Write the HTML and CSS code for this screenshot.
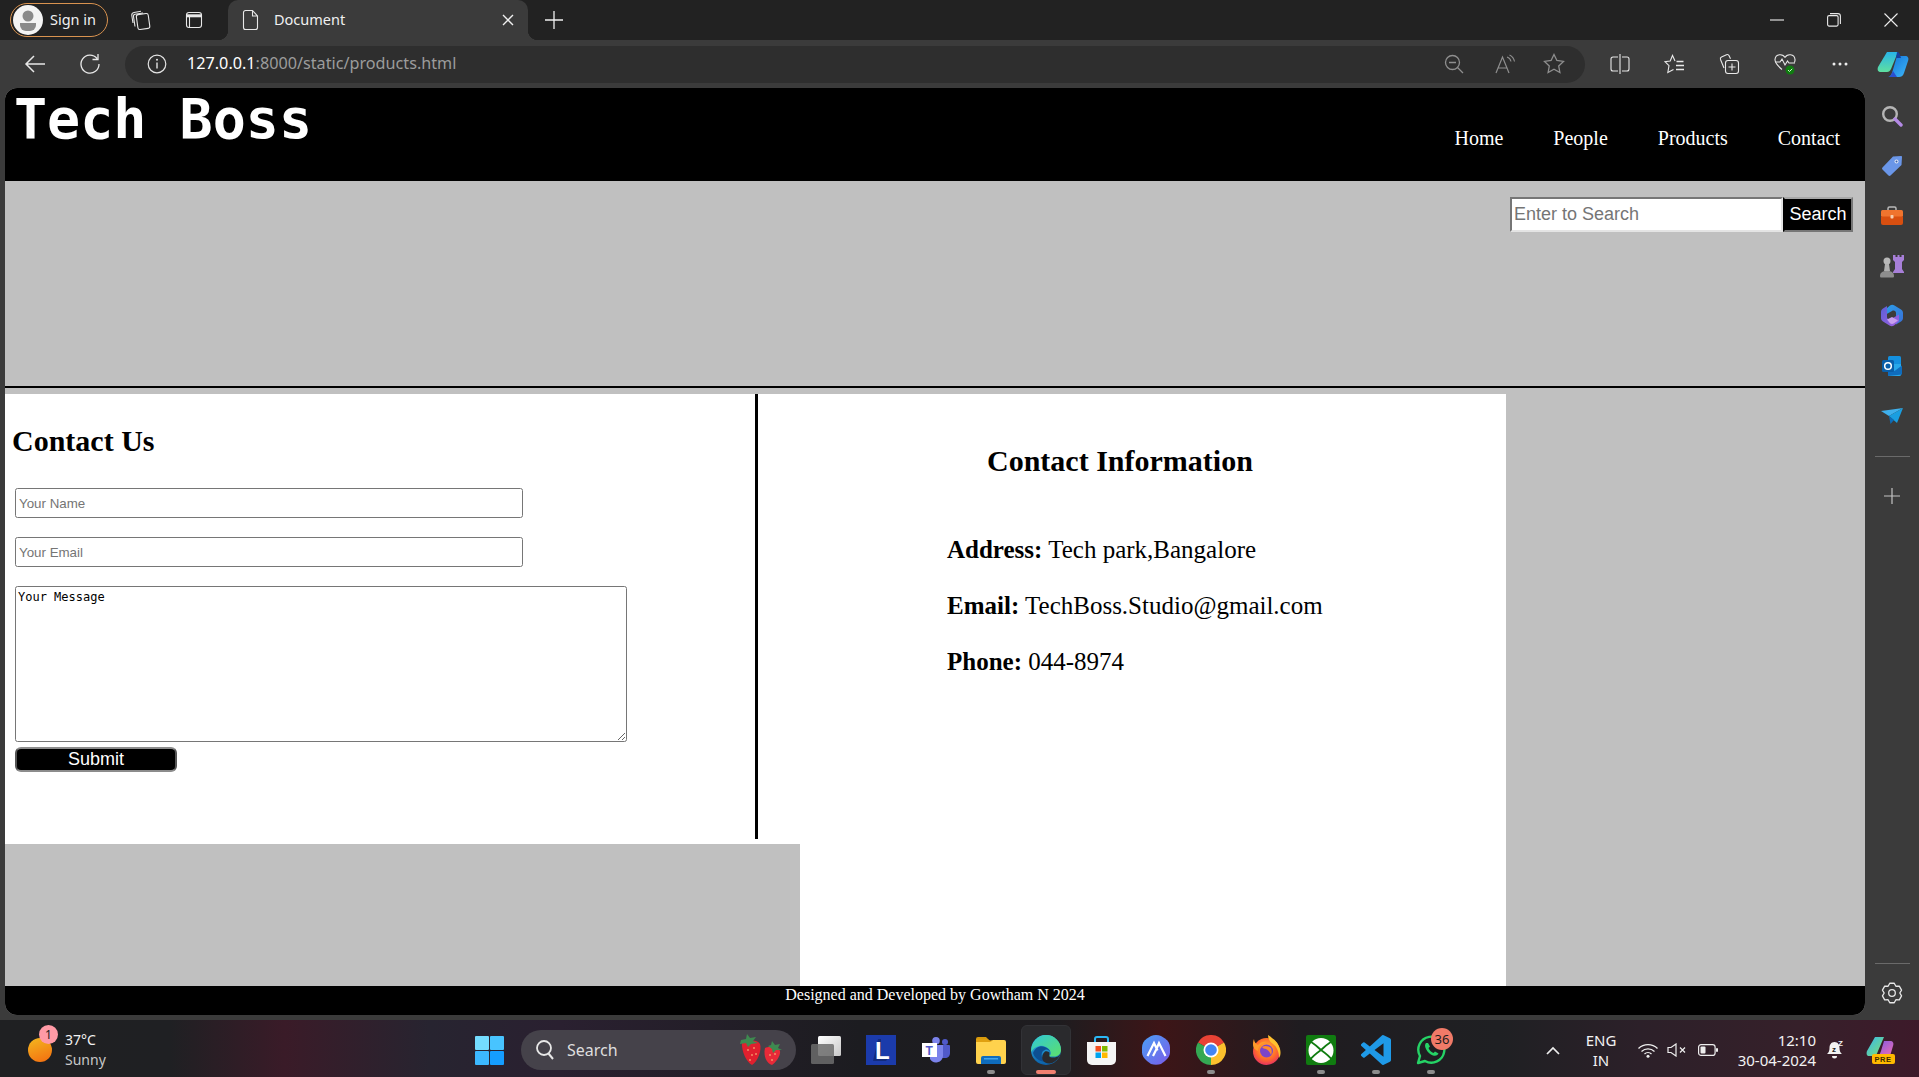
FILE: index.html
```html
<!DOCTYPE html>
<html lang="en">
<head>
<meta charset="utf-8">
<title>Document</title>
<link rel="stylesheet" href="styles.css">
</head>
<body>
<div class="screen">

  <div class="titlebar">
    <div class="signin">
      <svg class="avatar" width="30" height="30" viewBox="0 0 30 30"><circle cx="15" cy="15" r="15" fill="#f4f4f4"/><circle cx="15" cy="11" r="5.5" fill="#8a8a8a"/><path d="M7 18h16v2a6 6 0 0 1-6 6h-4a6 6 0 0 1-6-6z" fill="#8a8a8a"/></svg>
      <span class="nudge">Sign in</span>
    </div>
    <div class="tslot first"><svg width="22" height="22" viewBox="0 0 22 22" class="ln"><rect x="7" y="5" width="12" height="15" rx="2" transform="rotate(-8 13 12)"/><path d="M5 17.500 3.500 7.500c-.2-1 .4-2 1.500-2.200l8-1.300M3 14 1.800 6.500C1.600 5 2.500 3.800 4 3.500l7-1.200"/></svg></div>
    <div class="tslot second"><svg width="20" height="20" viewBox="0 0 20 20" class="ln"><rect x="2.500" y="2.500" width="15" height="15" rx="2.500"/><path d="M2.500 5.800h15" stroke-width="3"/><path d="M5.500 6v11"/></svg></div>
    <div class="tab">
      <svg width="18" height="22" viewBox="0 0 18 22" class="ln"><path d="M3.500 1.500h7l5 5.500v11.500a2 2 0 0 1-2 2h-10a2 2 0 0 1-2-2v-15a2 2 0 0 1 2-2zM10.500 1.500V7h5"/></svg>
      <span class="tab-title nudge">Document</span>
      <svg class="tab-close" width="12" height="12" viewBox="0 0 12 12"><path d="M1 1l10 10M11 1 1 11" stroke="#f0f0f0" stroke-width="1.400"/></svg>
    </div>
    <div class="tslot second"><svg width="18" height="18" viewBox="0 0 18 18"><path d="M9 0v18M0 9h18" stroke="#f0f0f0" stroke-width="1.300"/></svg></div>
    <div class="winctl">
      <div class="wslot"><svg width="14" height="14" viewBox="0 0 14 14"><path d="M0 7h14" stroke="#eee" stroke-width="1.100"/></svg></div>
      <div class="wslot"><svg width="14" height="14" viewBox="0 0 14 14" class="ln"><rect x=".6" y="2.600" width="10.500" height="10.500" rx="1.500"/><path d="M3 .6h8a2.500 2.500 0 0 1 2.400 2.400v8"/></svg></div>
      <div class="wslot"><svg width="14" height="14" viewBox="0 0 14 14"><path d="M.5.5l13 13M13.500.5l-13 13" stroke="#eee" stroke-width="1.100"/></svg></div>
    </div>
  </div>

  <div class="toolbar">
    <div class="bslot back"><svg width="22" height="20" viewBox="0 0 22 20"><path d="M21 10H2M10 2l-8 8 8 8" fill="none" stroke="#e8e8e8" stroke-width="1.500"/></svg></div>
    <div class="bslot reload"><svg width="22" height="22" viewBox="0 0 22 22" class="ln"><path d="M18 5.500A9 9 0 1 0 20 11M19 1v5.500h-5.500" stroke-width="1.300"/></svg></div>
    <div class="addr">
      <svg class="info" width="20" height="20" viewBox="0 0 20 20"><circle cx="10" cy="10" r="8.800" fill="none" stroke="#e4e4e4" stroke-width="1.200"/><path d="M10 8.500v6" stroke="#e4e4e4" stroke-width="1.400"/><circle cx="10" cy="5.800" r="1" fill="#e4e4e4"/></svg>
      <div class="url"><span class="host">127.0.0.1</span>:8000/static/products.html</div>
      <div class="addr-icons">
        <div class="aslot"><svg width="20" height="20" viewBox="0 0 20 20"><circle cx="8.500" cy="8.500" r="7" fill="none" stroke="#8f8f8f" stroke-width="1.300"/><path d="M5 8.500h7M13.500 13.500 19 19" stroke="#8f8f8f" stroke-width="1.300"/></svg></div>
        <div class="aslot read"><svg width="22" height="20" viewBox="0 0 22 20"><path d="M1 19 7.500 3 14 19M3.300 14h8.400" fill="none" stroke="#8f8f8f" stroke-width="1.200"/><path d="M12 3a6 6 0 0 1 4 4.500M14.500 1a9 9 0 0 1 5 6.500" fill="none" stroke="#8f8f8f" stroke-width="1.100"/></svg></div>
        <div class="aslot"><svg width="22" height="22" viewBox="0 0 22 22"><path d="M11 1.500l2.900 6 6.600.9-4.800 4.600 1.200 6.500-5.900-3.200-5.900 3.200 1.200-6.500L1.500 8.400l6.600-.9z" fill="none" stroke="#8f8f8f" stroke-width="1.300"/></svg></div>
      </div>
    </div>
    <div class="bslot splitfirst"><svg width="20" height="20" viewBox="0 0 20 20" class="ln"><path d="M8 3H3a2 2 0 0 0-2 2v10a2 2 0 0 0 2 2h5M12 3h5a2 2 0 0 1 2 2v10a2 2 0 0 1-2 2h-5M10 0v20"/></svg></div>
    <div class="bslot"><svg width="21" height="20" viewBox="0 0 21 20" class="ln"><path d="M11 7 8.500 1.500 6.200 7 1 7.600l4 4-1.200 6.900 5.700-3"/><path d="M12.500 7.500h7M12 11.500h8M12 15.500h8" stroke-width="1.300"/></svg></div>
    <div class="bslot"><svg width="21" height="22" viewBox="0 0 21 22" class="ln"><path d="M5 15 1.500 6.500a2 2 0 0 1 1-2.500l5-2.300a2 2 0 0 1 2.600 1l1.400 3"/><rect x="6.500" y="7.500" width="13" height="13" rx="2.500"/><path d="M13 10.500v7M9.500 14h7"/></svg></div>
    <div class="bslot"><svg width="22" height="24" viewBox="0 0 22 24" class="ln"><path d="M11 5.500C9 1.500 1.500 1.500 1 7.500c-.2 3 3 6.500 7 10M11 5.500c2-4 9.500-4 10 2 .1 1-.1 2-.6 3"/><path d="M1 10h5l2-3 3 6 2.500-4 1.500 2h6"/><circle cx="16" cy="18" r="4.500" fill="#107c10" stroke="none"/><path d="M14 18l1.500 1.500 2.700-2.700" stroke="#d4f0d4" stroke-width="1"/></svg></div>
    <div class="bslot"><svg width="16" height="4" viewBox="0 0 16 4"><circle cx="2" cy="2" r="1.500" fill="#eee"/><circle cx="8" cy="2" r="1.500" fill="#eee"/><circle cx="14" cy="2" r="1.500" fill="#eee"/></svg></div>
    <div class="bslot last"><svg width="32" height="28" viewBox="0 0 32 28"><defs><linearGradient id="cp1" x1="0" y1="0" x2="0" y2="1"><stop offset="0" stop-color="#28b4e8"/><stop offset="1" stop-color="#5fe0a0"/></linearGradient><linearGradient id="cp2" x1="0" y1="0" x2="1" y2="1"><stop offset="0" stop-color="#0f6fd8"/><stop offset="1" stop-color="#3fb8f8"/></linearGradient></defs><path d="M10 2h11l-7 17c-1 2-2 3-4 3H4c-3 0-4-2-3-5z" fill="url(#cp1)"/><path d="M20 6h8c3 0 4 2 3 5l-4 12c-1 3-3 4-5 4H11c2 0 3-2 4-4z" fill="url(#cp2)"/><path d="M20 2c2 0 3 2 3 3l1 3h-5z" fill="#163f9e"/><path d="M11 27c2 0 3-2 4-4l1-2 4 6z" fill="#2a4fd0"/></svg></div>
  </div>

  <div class="mainrow">
    <div class="page">
      <header class="site-head">
        <h1 class="brand">Tech Boss</h1>
        <nav class="site-nav"><a>Home</a><a>People</a><a>Products</a><a>Contact</a></nav>
      </header>
      <div class="hero">
        <form class="searchform"><input class="searchbox" placeholder="Enter to Search"><button class="searchbtn" type="button">Search</button></form>
      </div>
      <div class="rule"></div>
      <div class="contact">
        <div class="contact-left">
          <div class="form-panel">
            <form class="form-col">
              <h2 class="form-title">Contact Us</h2>
              <input class="field" placeholder="Your Name">
              <input class="field" placeholder="Your Email">
              <textarea class="msg">Your Message</textarea>
              <button class="submit" type="button">Submit</button>
            </form>
            <div class="divider"></div>
          </div>
        </div>
        <div class="contact-right">
          <h2 class="info-title">Contact Information</h2>
          <p class="info-row"><b>Address:</b> Tech park,Bangalore</p>
          <p class="info-row"><b>Email:</b> TechBoss.Studio@gmail.com</p>
          <p class="info-row"><b>Phone:</b> 044-8974</p>
        </div>
      </div>
      <footer class="site-foot">Designed and Developed by Gowtham N 2024</footer>
    </div>

    <aside class="sidebar">
      <div class="sslot"><svg width="22" height="22" viewBox="0 0 22 22"><circle cx="9" cy="9" r="6.800" fill="none" stroke="#b5b5b5" stroke-width="2.400"/><path d="M14 14l6 6" stroke="#b48ae6" stroke-width="3.400" stroke-linecap="round"/></svg></div>
      <div class="sslot"><svg width="22" height="22" viewBox="0 0 22 22"><path d="M12 1.500 20 1c.6 0 1 .4 1 1l-.5 8L9.500 20.500c-.6.600-1.500.6-2 0L1.500 14.500c-.6-.6-.6-1.500 0-2z" fill="#6a96e8"/><circle cx="15.500" cy="6.500" r="2" fill="#dfe8f8"/><circle cx="15.500" cy="6.500" r="1" fill="#3a5fa8"/></svg></div>
      <div class="sslot"><svg width="22" height="20" viewBox="0 0 22 20"><path d="M7 5V2.500C7 1.700 7.700 1 8.500 1h5c.8 0 1.500.7 1.500 1.500V5" fill="none" stroke="#b9b9b9" stroke-width="1.500"/><rect y="4" width="22" height="7" rx="1.500" fill="#f0742e"/><path d="M0 10.500h22V17a2 2 0 0 1-2 2H2a2 2 0 0 1-2-2z" fill="#d84f10"/><rect x="9.500" y="9" width="3" height="3.500" rx=".8" fill="#f7d0b0"/></svg></div>
      <div class="sslot"><svg width="24" height="24" viewBox="0 0 24 24"><path d="M13 1h2.500v2h2V1h2v2h2V1H24v5l-2 2v7l2 3v1H13v-1l2-3V8l-2-2z" fill="#a77fd8"/><circle cx="7" cy="7" r="3.500" fill="#b8b8b8"/><path d="M5 10h4l1 7H4z" fill="#b0b0b0"/><path d="M0 22c0-3 2-5 7-5s7 2 7 5c0 1-.5 1.500-1.500 1.500h-11C.5 23.500 0 23 0 22z" fill="#8d8d8d"/></svg></div>
      <div class="sslot"><svg width="22" height="24" viewBox="0 0 22 24"><defs><linearGradient id="m1" x1="0" y1="0" x2="1" y2="1"><stop offset="0" stop-color="#5b5fd6"/><stop offset="1" stop-color="#a060e0"/></linearGradient><linearGradient id="m2" x1="0" y1="0" x2="1" y2="1"><stop offset="0" stop-color="#2a9fe8"/><stop offset="1" stop-color="#3a6fd8"/></linearGradient></defs><path d="M9 1.500c1.500-1 3-1 4.500 0L20 5.500c1.300.8 2 2 2 3.500v5c0 1.500-.7 2.700-2 3.500L15 20.500V9c0-2-2-3-4-2L4 11V7c0-1 .5-1.900 1.500-2.500z" fill="url(#m2)"/><path d="M0 8c0-1.500.7-2.700 2-3.500L6 2v11c0 2 2 3 4 2l8-4.500V16c0 1-.5 1.900-1.500 2.500L13 21.500c-1.500 1-3 1-4.500 0L2 17.500C.7 16.700 0 15.500 0 14z" fill="url(#m1)"/><path d="M6 15.500 11 13l6 3.500-4 2.800a4 4 0 0 1-4 0z" fill="#c8a0f0"/></svg></div>
      <div class="sslot"><svg width="20" height="20" viewBox="0 0 20 20"><rect x="6" y="0" width="13" height="18" rx="1.500" fill="#1490df"/><path d="M6 8l13 0v10.500a1.500 1.500 0 0 1-1.500 1.500H7.500A1.500 1.500 0 0 1 6 18.500z" fill="#28a8ea"/><path d="M6 11l6.500 4L20 9.500v9L6 20z" fill="#0f6cbd"/><rect x="0" y="4" width="12" height="12" rx="1.500" fill="#0a5ea8"/><circle cx="6" cy="10" r="3.300" fill="none" stroke="#fff" stroke-width="1.500"/></svg></div>
      <div class="sslot"><svg width="22" height="16" viewBox="0 0 22 16"><path d="M0 3 22 0 8 8z" fill="#3fb0ec"/><path d="M22 0 16 15 8 8z" fill="#1a9ee0"/><path d="M8 8l1.500 8 3.500-4z" fill="#0c6cb8"/></svg></div>
      <div class="side-sep"></div>
      <div class="sslot plus"><svg width="16" height="16" viewBox="0 0 16 16"><path d="M8 0v16M0 8h16" stroke="#c4c4c4" stroke-width="1.200"/></svg></div>
      <div class="side-sep bottom"></div>
      <div class="sslot gear"><svg width="22" height="22" viewBox="0 0 22 22" class="ln gear-ico"><path d="M8.750 1.260h4.500L14.900 4.250l3.410-.07 2.250 3.900L18.800 11l1.760 2.920-2.250 3.900-3.410-.07-1.650 2.990h-4.500L7.100 17.750l-3.410.07-2.250-3.900L3.200 11 1.440 8.080l2.250-3.900 3.410.07z"/><circle cx="11" cy="11" r="3.300"/></svg></div>
    </aside>
  </div>

  <div class="taskbar">
    <div class="widgets">
      <div class="sun"><span class="sun-badge">1</span></div>
      <div class="weather"><span>37°C</span><span class="dim">Sunny</span></div>
    </div>
    <svg class="start" width="29" height="29" viewBox="0 0 29 29"><rect width="14" height="14" rx="1" fill="#74dcff"/><rect x="15" width="14" height="14" rx="1" fill="#48c4ff"/><rect y="15" width="14" height="14" rx="1" fill="#3cb8ff"/><rect x="15" y="15" width="14" height="14" rx="1" fill="#159dff"/></svg>
    <div class="tsearch">
      <svg width="20" height="22" viewBox="0 0 20 22"><circle cx="9" cy="9" r="7" fill="none" stroke="#e8e8e8" stroke-width="1.800"/><path d="M13.500 14.500 18 20" stroke="#e8e8e8" stroke-width="2"/></svg>
      <span class="tsearch-text">Search</span>
      <svg class="berries" width="44" height="32" viewBox="0 0 44 32"><path d="M3 8c3-2 15-3 18 2 2 6-2 17-8 21-5-2-11-14-10-23z" fill="#e0202e"/><path d="M26 14c4-2 13-1 15 3 1 5-5 12-8 14-5-1-9-9-7-17z" fill="#e82a38"/><path d="M2 6 7 5l1-5 3 4 6-1-3 4 5 2-7 1-3 3-2-4-6 1z" fill="#3e8a50"/><path d="M29 12l3-1 1-4 3 4 5-1-2 4 4 2-6 0-3 3-1-4z" fill="#3e8a50"/><g fill="#ffd88a"><circle cx="9" cy="16" r=".8"/><circle cx="15" cy="14" r=".8"/><circle cx="13" cy="21" r=".8"/><circle cx="17" cy="20" r=".8"/><circle cx="11" cy="26" r=".8"/><circle cx="31" cy="21" r=".8"/><circle cx="36" cy="20" r=".8"/><circle cx="33" cy="26" r=".8"/></g></svg>
    </div>
    <div class="apps">
      <div class="app"><svg width="30" height="28" viewBox="0 0 30 28"><defs><linearGradient id="tv" x1="0" y1="0" x2="1" y2="1"><stop offset="0" stop-color="#fff"/><stop offset="1" stop-color="#c8c8c8"/></linearGradient></defs><rect x="7" y="0" width="23" height="20" rx="1.500" fill="url(#tv)"/><rect x="0" y="8" width="23" height="20" rx="1.500" fill="#6c6c6c" fill-opacity=".85"/></svg></div>
      <div class="app"><svg width="30" height="30" viewBox="0 0 30 30"><rect width="30" height="30" fill="#1b3bab"/><path d="M7 26l5-22h3v18h8l-3 4z" fill="#102568" fill-opacity=".7"/><text x="9" y="24" class="letter-l">L</text></svg></div>
      <div class="app"><svg width="28" height="26" viewBox="0 0 28 26"><circle cx="14" cy="3.800" r="3.800" fill="#7b83eb"/><circle cx="23" cy="5" r="3" fill="#5059c9"/><path d="M19 8h8a1 1 0 0 1 1 1v7c0 3-2 5-5 5h-4z" fill="#5059c9"/><path d="M8 8h13v11a7 7 0 0 1-13 3z" fill="#7b83eb"/><rect x="0" y="6" width="15" height="14" fill="#fff"/><text x="3.600" y="17.500" class="letter-t">T</text></svg></div>
      <div class="app has-dot"><svg width="30" height="27" viewBox="0 0 30 27"><path d="M0 2a2 2 0 0 1 2-2h8l4 4h-14z" fill="#d99a0c"/><path d="M0 4h14l3-1h11a2 2 0 0 1 2 2v20a2 2 0 0 1-2 2H2a2 2 0 0 1-2-2z" fill="#ffd24d"/><path d="M0 5h14l3-1.500h-3L11 2H0z" fill="#e0a010"/><path d="M5 21a2 2 0 0 1 2-2h16a2 2 0 0 1 2 2v6H5z" fill="#0f6cbd"/><rect x="8" y="21" width="14" height="1.500" fill="#41a5ee"/></svg></div>
      <div class="app active"><svg width="30" height="30" viewBox="0 0 30 30"><defs><linearGradient id="e1" x1="0" y1="0" x2="0" y2="1"><stop offset="0" stop-color="#35c1f1"/><stop offset="1" stop-color="#0b5fa8"/></linearGradient><linearGradient id="e2" x1="0" y1="0" x2="1" y2="1"><stop offset="0" stop-color="#30c8d8"/><stop offset="1" stop-color="#5de06a"/></linearGradient></defs><circle cx="15" cy="15" r="15" fill="url(#e1)"/><path d="M15 0a15 15 0 0 1 15 15c0 4-3 6.500-7 6.500H17c2.500-1 3.500-3 2.500-5C18 13 13 10 8 11 4 12 2 14 0 17 0 7 7 0 15 0z" fill="url(#e2)"/><path d="M2 18c2-5 7-8 12-6 3 1 5 3 5 5-1-2-3-3-5-2-3 1-4 4-3 7 1 2.500 4 4 8 4-6 2.500-15-1-17-8z" fill="#0d4f92"/><path d="M30 16c0 2-.8 4-2 6-2 3.500-6 6.300-9.500 6.500-3.500 0-6-1.500-7-4-.8-2.500 0-6 2.500-8 2-1 4 .5 4.500 1 0 3-1.500 5 4 5 4 0 7-2 7.500-6.500z" fill="#2a2a2d"/></svg><span class="active-bar"></span></div>
      <div class="app"><svg width="29" height="30" viewBox="0 0 29 30"><path d="M8 7V4a2 2 0 0 1 2-2h9a2 2 0 0 1 2 2v3" fill="none" stroke="#2bb7f5" stroke-width="2"/><path d="M0 7h29v18a5 5 0 0 1-5 5H5a5 5 0 0 1-5-5z" fill="#f5f5f5"/><rect x="8.500" y="11" width="5.500" height="5.500" fill="#f25022"/><rect x="15" y="11" width="5.500" height="5.500" fill="#7fba00"/><rect x="8.500" y="17.500" width="5.500" height="5.500" fill="#00a4ef"/><rect x="15" y="17.500" width="5.500" height="5.500" fill="#ffb900"/></svg></div>
      <div class="app"><svg width="28" height="30" viewBox="0 0 28 30"><defs><linearGradient id="a1" x1="0" y1="0" x2="1" y2="1"><stop offset="0" stop-color="#4aa0f5"/><stop offset="1" stop-color="#7a5ae8"/></linearGradient></defs><path d="M9 1c3-1.300 7-1.300 10 0l4 2.500c3 2 5 5 5 9v5c0 3-2 6-5 8.500l-4 3c-3 1-7 1-10 0l-4-3c-3-2.500-5-5.500-5-8.500v-5c0-4 2-7 5-9z" fill="url(#a1)"/><path d="M5.500 21 12 8l3.500 7.500M11 21l3-6 3-7 6.500 13" fill="none" stroke="#fff" stroke-width="2.200"/></svg></div>
      <div class="app has-dot"><svg width="30" height="30" viewBox="0 0 30 30"><path d="M15 15 2 7.500a15 15 0 0 1 26 0z" fill="#e94235"/><path d="M15 15 28 7.500A15 15 0 0 1 15 30z" fill="#fbc02d"/><path d="M15 15V30A15 15 0 0 1 2 7.500z" fill="#34a853"/><circle cx="15" cy="15" r="7.500" fill="#fff"/><circle cx="15" cy="15" r="5.800" fill="#4285f4"/></svg></div>
      <div class="app"><svg width="29" height="30" viewBox="0 0 29 30"><defs><radialGradient id="f1" cx=".5" cy=".4" r=".65"><stop offset="0" stop-color="#ffbd2e"/><stop offset=".6" stop-color="#ff6a2b"/><stop offset="1" stop-color="#e3276b"/></radialGradient></defs><circle cx="14.500" cy="16.500" r="13.500" fill="url(#f1)"/><path d="M16 0c4 3 10 6 12 14 1 4 .5 7-1 9 0-6-2-11-6-14-3-2-5-5-5-9z" fill="#ffc12e"/><path d="M2 4c0 3 2 5 4 6 2-3 6-4 9-3-4 1-9 4-9 9-3-1-5-3-5-6 0-2 0-4 1-6z" fill="#ff9a2a"/><circle cx="14.500" cy="16" r="6.500" fill="#7d45c8"/><path d="M10 12c3-2 7-1 9 1 1 2 1 5 0 7-1-3-3-5-5-6-2 0-3-1-4-2z" fill="#ff8a2a"/></svg></div>
      <div class="app has-dot"><svg width="30" height="30" viewBox="0 0 30 30"><rect width="30" height="30" rx="2" fill="#107c10"/><circle cx="15" cy="15.500" r="12.500" fill="#fff"/><path d="M4.500 6.500C9 9.500 13 13 15 15c2-2 6-5.500 10.500-8.500M3.500 25.500c3-4.500 8-8 11.500-10.500 3.500 2.500 8.500 6 11.500 10.500" fill="none" stroke="#107c10" stroke-width="1.800"/></svg></div>
      <div class="app has-dot"><svg width="30" height="30" viewBox="0 0 24 24"><path d="M23.150 2.587 18.210.21a1.494 1.494 0 0 0-1.705.29l-9.460 8.630-4.120-3.128a.999.999 0 0 0-1.276.057L.327 7.261A1 1 0 0 0 .326 8.740L3.899 12 .326 15.260a1 1 0 0 0 .001 1.479L1.650 17.940a.999.999 0 0 0 1.276.057l4.120-3.128 9.460 8.630a1.492 1.492 0 0 0 1.704.29l4.942-2.377A1.500 1.500 0 0 0 24 20.060V3.939a1.500 1.500 0 0 0-.85-1.352zm-5.146 14.861L10.826 12l7.178-5.448v10.896z" fill="#1f9ae8"/></svg></div>
      <div class="app has-dot"><svg width="30" height="30" viewBox="0 0 30 30"><path d="M2 28l2-7a13 13 0 1 1 5 5z" fill="none" stroke="#25d366" stroke-width="2.400" stroke-linejoin="round"/><path d="M10 8c-1 1-1.500 3 0 6s4 5.500 7 6.500 5-.5 5.500-2l-3.500-2-1.500 1.500c-2-.5-4-2.500-5-5l1.500-1.500-2-3.500z" fill="#25d366"/></svg><span class="wa-badge">36</span></div>
    </div>
    <div class="tray">
      <div class="tr-chev"><svg width="14" height="9" viewBox="0 0 14 9"><path d="M1 8l6-6 6 6" fill="none" stroke="#eee" stroke-width="1.700"/></svg></div>
      <div class="tr-lang"><span>ENG</span><span>IN</span></div>
      <div class="tr-wifi"><svg width="20" height="15" viewBox="0 0 20 15"><g fill="none" stroke="#eee" stroke-width="1.300"><path d="M.5 5.500a13.500 13.500 0 0 1 19 0M3.500 8.500a9.500 9.500 0 0 1 13 0M6.500 11a5 5 0 0 1 7 0"/></g><circle cx="10" cy="13.300" r="1.500" fill="#eee"/></svg></div>
      <div class="tr-spk"><svg width="20" height="14" viewBox="0 0 20 14"><path d="M1 4.500h3L9 1v12L4 9.500H1z" fill="none" stroke="#eee" stroke-width="1.200"/><path d="M13 4.500l5 5M18 4.500l-5 5" stroke="#eee" stroke-width="1.200"/></svg></div>
      <div class="tr-bat"><svg width="20" height="12" viewBox="0 0 20 12"><rect x=".6" y=".6" width="16.500" height="10.800" rx="2.500" fill="none" stroke="#eee" stroke-width="1.200"/><rect x="2.500" y="2.500" width="5" height="7" rx="1" fill="#eee"/><rect x="18" y="4" width="2" height="4" rx="1" fill="#eee"/></svg></div>
      <div class="tr-clock"><span>12:10</span><span>30-04-2024</span></div>
      <div class="tr-bell"><svg width="18" height="20" viewBox="0 0 18 20"><path d="M8.500 2C5 2 3.500 5 3.500 8c0 3-1 5-2.500 6h15C14.500 13 13.500 11 13.500 8c0-3-1.500-6-5-6z" fill="#f2f2f2"/><path d="M6 16h5a2.500 2.500 0 0 1-5 0z" fill="#f2f2f2"/><text x="6" y="11.500" class="zz">z</text><text x="12" y="6" class="zz top">Z</text></svg></div>
      <div class="tr-pre"><svg width="29" height="28" viewBox="0 0 29 28"><defs><linearGradient id="p1" x1="0" y1="0" x2="1" y2="1"><stop offset="0" stop-color="#35b8f0"/><stop offset="1" stop-color="#7fe070"/></linearGradient><linearGradient id="p2" x1="0" y1="0" x2="1" y2="1"><stop offset="0" stop-color="#7a5ae8"/><stop offset="1" stop-color="#f06cb0"/></linearGradient></defs><path d="M9 1h9l-6 14c-1 3-2 5-5 5H3c-2 0-3-2-2-5z" fill="url(#p1)"/><path d="M18 5h6c3 0 4 2 3 5l-3 10H10c3 0 4-2 5-5z" fill="url(#p2)"/><rect x="6" y="18" width="23" height="10" rx="2" fill="#ffb900"/><text x="8.500" y="26" class="pre">PRE</text></svg></div>
    </div>
  </div>
</div>
</body>
</html>
```
FILE: styles.css
```css
* { box-sizing: border-box; }
html, body { margin: 0; padding: 0; height: 100%; overflow: hidden; background: #3b3b3b; }
.screen { width: 1919px; height: 1077px; overflow: hidden; display: flex; flex-direction: column; font-family: "Noto Sans", "Liberation Sans", sans-serif; color: #f0f0f0; }
svg { display: block; flex: none; }
.ln { fill: none; stroke: #e8e8e8; stroke-width: 1.1; }
.nudge { padding-bottom: 2px; }

/* title bar */
.titlebar { height: 40px; background: #222222; display: flex; align-items: center; flex: none; }
.signin { width: 98px; height: 34px; margin-left: 10px; border: 1px solid #d8924f; border-radius: 17px; display: flex; align-items: center; padding-left: 2px; gap: 7px; font-size: 14.5px; }
.tslot { height: 40px; display: flex; align-items: center; justify-content: center; }
.tslot.first { width: 54px; margin-left: 6px; }
.tslot.second { width: 52px; }
.tab { width: 300px; height: 40px; margin-left: 8px; background: #3b3b3b; border-radius: 10px 10px 0 0; display: flex; align-items: center; padding-left: 14px; position: relative; }
.tab::before, .tab::after { content: ""; position: absolute; bottom: 0; width: 10px; height: 10px; }
.tab::before { left: -10px; background: radial-gradient(circle at 0 0, #222222 10px, #3b3b3b 10.5px); }
.tab::after { right: -10px; background: radial-gradient(circle at 100% 0, #222222 10px, #3b3b3b 10.5px); }
.tab-title { margin-left: 14px; font-size: 14.5px; color: #f0f0f0; }
.tab-close { margin-left: auto; margin-right: 14px; }
.winctl { margin-left: auto; display: flex; }
.wslot { width: 57px; height: 40px; display: flex; align-items: center; justify-content: center; }

/* toolbar */
.toolbar { height: 48px; background: #3b3b3b; display: flex; align-items: center; flex: none; overflow: hidden; }
.bslot { width: 55px; height: 48px; flex: none; display: flex; align-items: center; justify-content: center; }
.bslot.back { width: 54px; margin-left: 8px; }
.bslot.reload { width: 56px; }
.bslot.splitfirst { margin-left: 7px; }
.bslot.last { width: 52px; }
.addr { width: 1460px; height: 37px; flex: none; margin-left: 7px; background: #2e2e2e; border-radius: 19px; display: flex; align-items: center; padding-left: 22px; padding-right: 6px; }
.url { margin-left: 20px; font-size: 16.2px; color: #9c9c9c; white-space: nowrap; padding-bottom: 2px; }
.host { color: #ffffff; }
.addr-icons { margin-left: auto; display: flex; }
.aslot { width: 50px; height: 37px; display: flex; align-items: center; justify-content: center; }
.aslot.read { padding-left: 4px; }

/* main row */
.mainrow { flex: none; height: 932px; display: flex; background: #3b3b3b; padding-left: 5px; }
.page { width: 1860px; height: 927px; background: #c0c0c0; border-radius: 12px; overflow: hidden; display: flex; flex-direction: column; font-family: "Liberation Serif", "Times New Roman", serif; color: #000; }

.site-head { height: 93px; background: #000; color: #fff; display: flex; justify-content: space-between; flex: none; }
.brand { margin: 0; padding: 0 0 0 9px; font-family: "DejaVu Sans Mono", monospace; font-size: 55px; line-height: 63px; font-weight: 700; color: #fff; }
.site-nav { display: flex; gap: 50px; padding: 39px 25px 0 0; font-size: 20px; line-height: 23px; }

.hero { height: 205px; flex: none; padding: 16px 12px 0 0; display: flex; justify-content: flex-end; align-items: flex-start; }
.searchform { display: flex; }
.searchbox { width: 273px; height: 35px; border: 2px solid; border-color: #767676 #e4e4e4 #e4e4e4 #767676; background: #fff; padding: 1px 2px; font: 18px "Liberation Sans", Arial, sans-serif; }
.searchbtn { width: 70px; height: 35px; padding: 0; background: #000; color: #fff; border: 2px solid; border-color: #a8a8a8 #767676 #767676 #000; font: 18px "Liberation Sans", Arial, sans-serif; }

.rule { height: 2px; background: #000; flex: none; }
.contact { flex: none; height: 592px; margin-top: 6px; display: flex; }
.contact-left { width: 795px; flex: none; }
.form-panel { height: 450px; background: #fff; display: flex; align-items: flex-start; }
.form-col { width: 750px; flex: none; display: flex; flex-direction: column; align-items: flex-start; padding-left: 10px; }
.form-title { margin: 30px 0 0 -3px; font-size: 30px; line-height: 34px; font-weight: 700; }
.field { width: 508px; height: 30px; margin-top: 19px; border: 1px solid #767676; border-radius: 2.5px; padding: 1px 3px; background: #fff; font: 13.333px "Liberation Sans", Arial, sans-serif; }
.form-title + .field { margin-top: 30px; }
.msg { width: 612px; height: 156px; margin-top: 19px; border: 1px solid #767676; border-radius: 2.5px; padding: 3px 2px 2px; font: 12px/15px "DejaVu Sans Mono", monospace; color: #000; display: block; }
.submit { width: 162px; height: 25px; margin-top: 5px; padding: 0 0 2px; background: #000; color: #fff; border: 2px solid #767676; border-color: #8c8c8c #555 #8c8c8c #555; border-radius: 6px; font: 18px/20px "Liberation Sans", Arial, sans-serif; }
.divider { width: 3px; height: 445px; background: #000; flex: none; }

.contact-right { width: 706px; flex: none; background: #fff; padding-left: 147px; }
.info-title { margin: 49px 0 0 40px; font-size: 30px; line-height: 35px; font-weight: 700; }
.info-row { margin: 27px 0 0; font-size: 25px; line-height: 29px; }
.info-title + .info-row { margin-top: 57px; }

.site-foot { flex: 1; background: #000; color: #fff; text-align: center; font-size: 16px; line-height: 18px; }

/* sidebar */
.sidebar { width: 54px; flex: none; height: 932px; display: flex; flex-direction: column; padding-top: 3px; padding-bottom: 3px; align-items: center; }
.sslot { width: 54px; height: 50px; flex: none; display: flex; align-items: center; justify-content: center; }
.side-sep { width: 35px; height: 1px; background: #6a6a6a; margin-top: 15px; flex: none; }
.sslot.plus { margin-top: 14px; }
.side-sep.bottom { margin-top: auto; margin-bottom: 5px; }
.sslot.gear { height: 48px; }
.gear-ico { stroke-width: 1.3; stroke-linejoin: round; }

/* taskbar */
.taskbar { flex: none; height: 57px; padding-top: 3px; display: flex; align-items: center; font-size: 14px; color: #f2f2f2; background: linear-gradient(90deg, #1f2022 0, #1f2023 170px, #3a1b28 285px, #272430 430px, #2a2030 560px, #1c1c20 860px, #1e1c1f 1060px, #3d1517 1160px, #1f1c20 1300px, #1f2023 1500px, #2c2029 1640px, #36202a 1800px, #3d1a2a 1919px); }
.widgets { width: 475px; flex: none; display: flex; align-items: center; padding-left: 28px; }
.sun { width: 24px; height: 24px; border-radius: 50%; background: linear-gradient(160deg, #f3b81f, #f36c10); position: relative; }
.sun-badge { position: absolute; left: 11px; top: -13px; width: 19px; height: 19px; border-radius: 50%; background: #ff9aa6; color: #222; font-size: 12px; line-height: 19px; text-align: center; }
.weather { display: flex; flex-direction: column; margin-left: 13px; font-size: 14px; line-height: 20px; }
.dim { color: #c8c8c8; }
.start { flex: none; }
.tsearch { width: 275px; height: 40px; margin-left: 17px; background: #45424a; border-radius: 20px; display: flex; align-items: center; padding-left: 14px; flex: none; }
.tsearch-text { margin-left: 12px; font-size: 16px; color: #dedede; }
.berries { margin-left: auto; margin-right: 13px; }
.apps { display: flex; margin-left: 2.5px; flex: none; }
.app { width: 50px; height: 50px; margin: 0 2.5px; display: flex; align-items: center; justify-content: center; border-radius: 6px; position: relative; }
.app.active { background: #2a2a2d; border: 1px solid #323236; }
.has-dot::after { content: ""; position: absolute; left: 21px; top: 45px; width: 8px; height: 4px; border-radius: 2px; background: #8c8c8c; }
.active-bar { position: absolute; left: 14px; top: 44px; width: 20px; height: 4px; border-radius: 2px; background: #f08070; }
.wa-badge { position: absolute; left: 25px; top: 3px; width: 22px; height: 22px; border-radius: 50%; background: #f07a68; color: #1d1d1d; font-size: 13px; line-height: 22px; text-align: center; }
.letter-l { font: 700 24px "Liberation Sans", sans-serif; fill: #fff; }
.letter-t { font: 700 12px "Liberation Sans", sans-serif; fill: #5059c9; }
.zz { font: 700 8px "Liberation Sans", sans-serif; fill: #222; }
.zz.top { fill: #f2f2f2; }
.pre { font: 700 7.5px "Liberation Sans", sans-serif; fill: #3a2a00; letter-spacing: .5px; }

.tray { margin-left: auto; display: flex; align-items: center; padding-right: 13px; font-size: 15px; }
.tray > div { display: flex; align-items: center; justify-content: center; flex: none; }
.tr-chev { width: 30px; }
.tr-lang { width: 66px; flex-direction: column; line-height: 20px; }
.tr-wifi { width: 28px; }
.tr-spk { width: 30px; }
.tr-bat { width: 32px; }
.tray > .tr-clock { width: 92px; flex-direction: column; align-items: flex-end; line-height: 20px; }
.tr-bell { width: 38px; }
.tr-pre { width: 52px; }
```
